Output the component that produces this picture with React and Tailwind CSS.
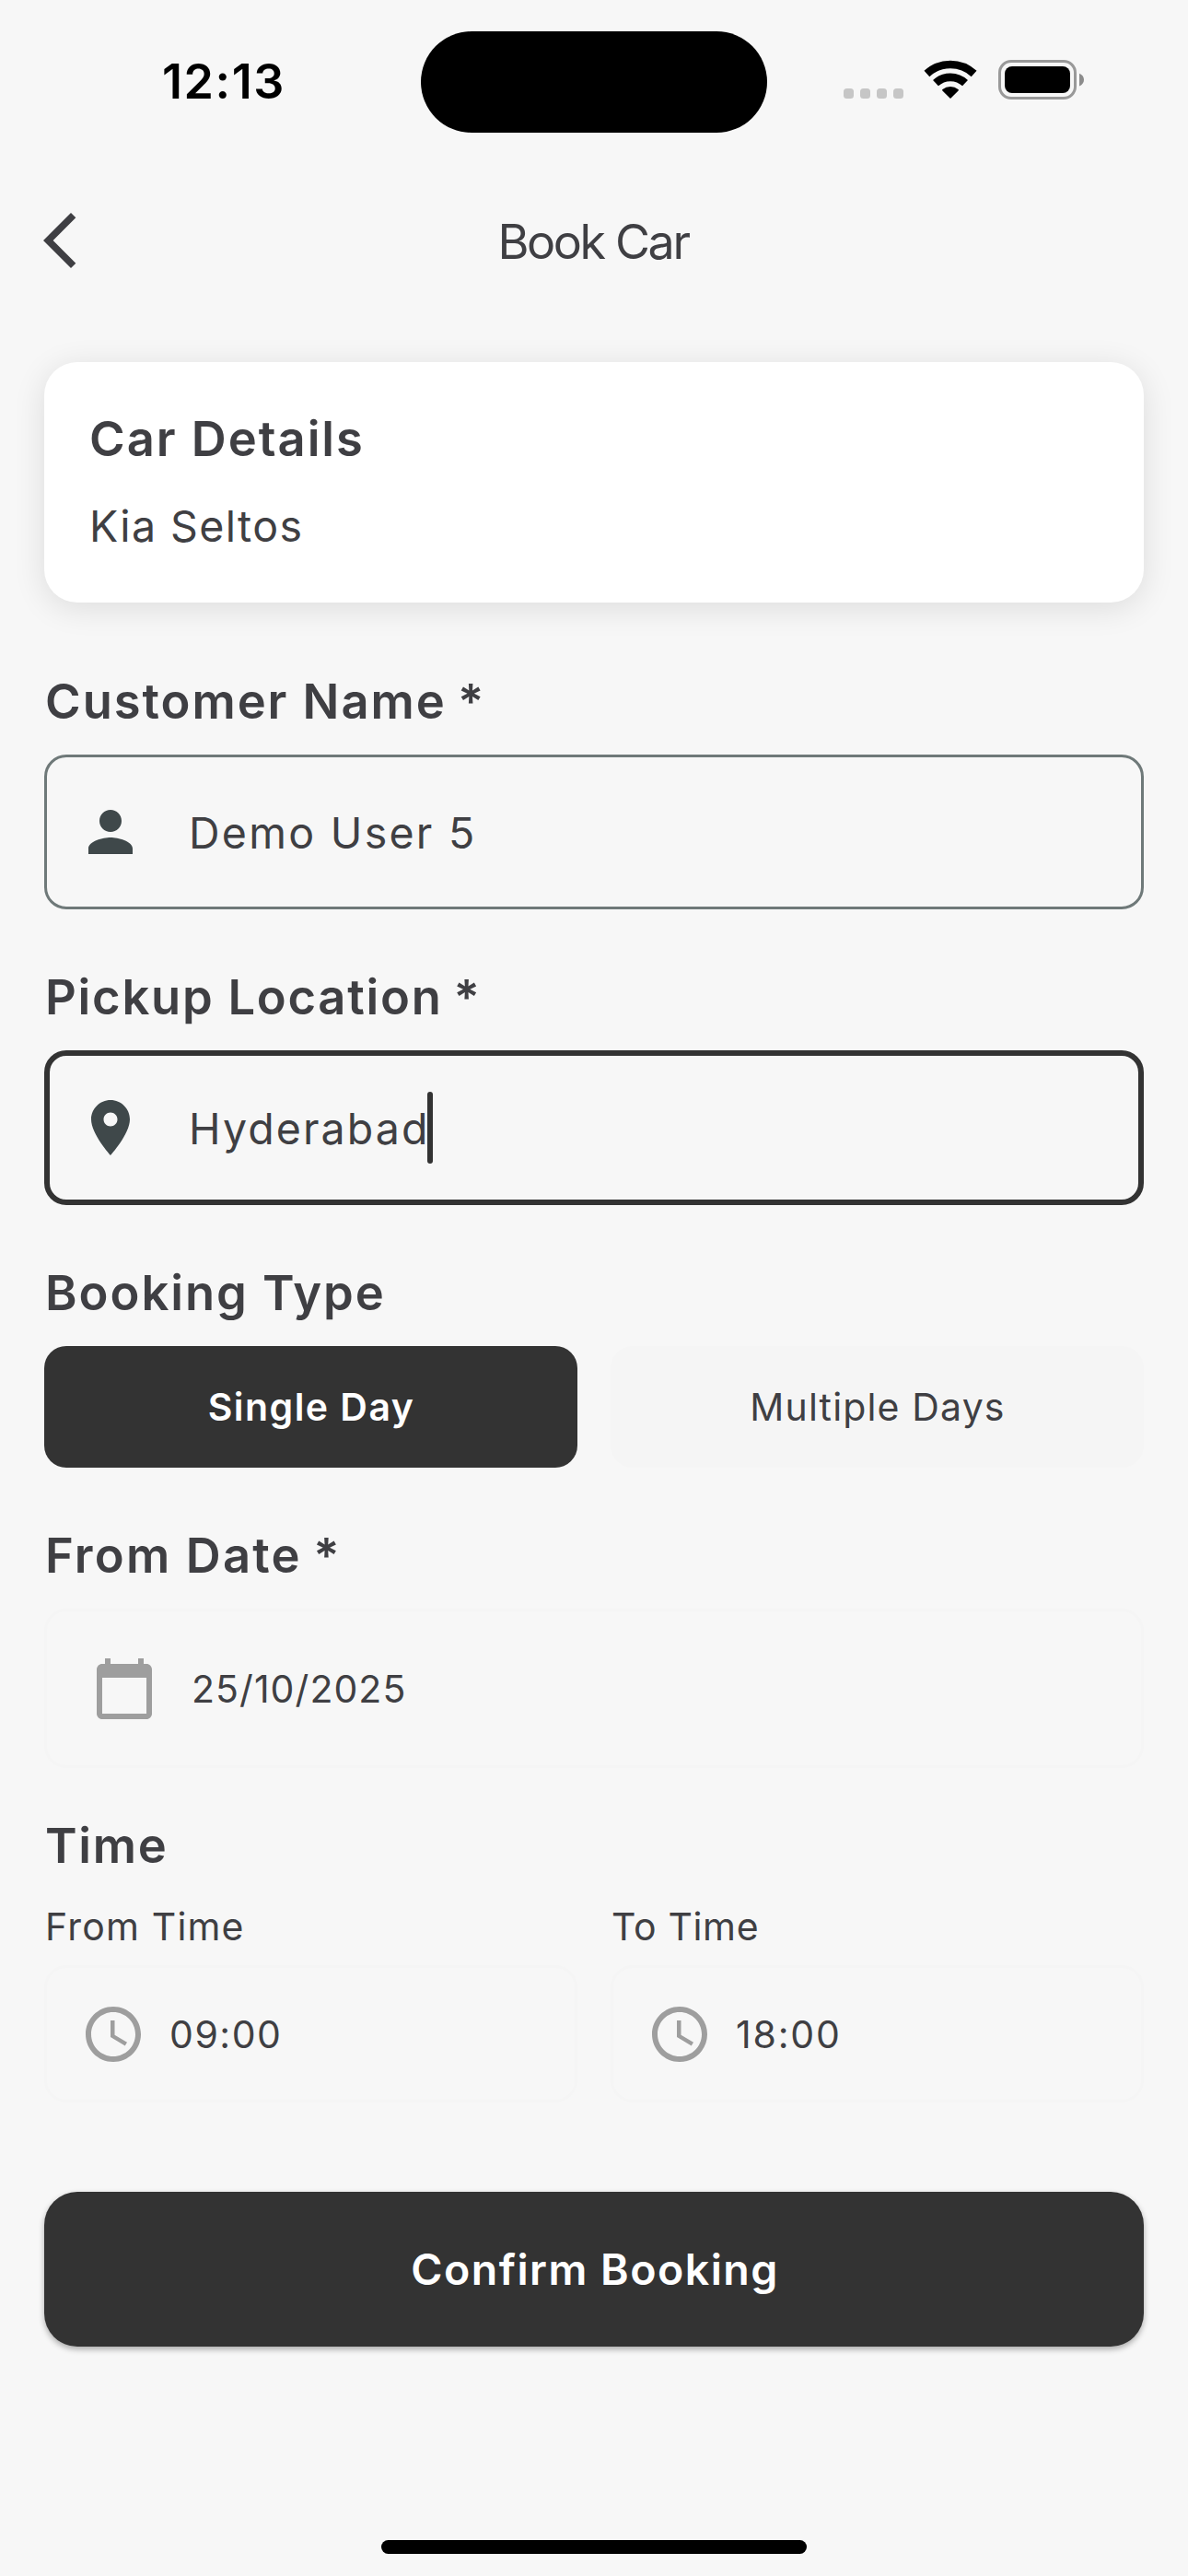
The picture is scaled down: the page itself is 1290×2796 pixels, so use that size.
function SignalDots() {
  return (
    <div className="mb-px flex items-end gap-[7px]">
      {[0, 1, 2, 3].map((i) => (
        <span key={i} className="size-[11px] rounded-[3.5px] bg-[#c6c6c6]" />
      ))}
    </div>
  );
}

function WifiIcon() {
  return (
    <svg viewBox="0 0 58 42" className="h-[42px] w-[58px]" fill="none" stroke="#000" strokeWidth="8.6">
      <path d="M3.4 15A37.7 37.7 0 0 1 54.6 15" />
      <path d="M13 25.2A23.3 23.3 0 0 1 45 25.2" />
      <path d="M29 42L20.4 33.4C20 33 20 32.4 20.5 32A13.5 13.5 0 0 1 37.5 32C38 32.4 38 33 37.6 33.4Z" fill="#000" stroke="none" />
    </svg>
  );
}

function BatteryIcon() {
  return (
    <svg viewBox="0 0 94 43" className="h-[43px] w-[94px]">
      <rect x="1.5" y="1.5" width="82" height="40" rx="12.5" fill="none" stroke="#999" strokeWidth="3" />
      <rect x="7" y="7" width="71" height="29" rx="8" fill="#000" />
      <path d="M88 14.8C91.4 16 93 18.6 93 21.6S91.4 27.2 88 28.4Z" fill="#8c8c8c" />
    </svg>
  );
}

function MaterialIcon({ d, color }) {
  return (
    <svg viewBox="0 0 24 24" className="size-[72px] shrink-0" fill={color}>
      <path d={d} />
    </svg>
  );
}

const BACK = "M17.77 3.77L16 2 6 12l10 10 1.77-1.77L9.54 12z";
const PERSON = "M12 12c2.21 0 4-1.79 4-4s-1.79-4-4-4-4 1.79-4 4 1.79 4 4 4zm0 2c-2.67 0-8 1.34-8 4v2h16v-2c0-2.66-5.33-4-8-4z";
const PIN = "M12 2C8.13 2 5 5.13 5 9c0 5.25 7 13 7 13s7-7.75 7-13c0-3.87-3.13-7-7-7zm0 9.5c-1.38 0-2.5-1.12-2.5-2.5s1.12-2.5 2.5-2.5 2.5 1.12 2.5 2.5-1.12 2.5-2.5 2.5z";
const CALENDAR = "M20 3h-1V1h-2v2H7V1H5v2H4c-1.1 0-2 .9-2 2v16c0 1.1.9 2 2 2h16c1.1 0 2-.9 2-2V5c0-1.1-.9-2-2-2zm0 18H4V8h16v13z";
const CLOCK = "M11.99 2C6.47 2 2 6.48 2 12s4.47 10 9.99 10C17.52 22 22 17.52 22 12S17.52 2 11.99 2zM12 20c-4.42 0-8-3.58-8-8s3.58-8 8-8 8 3.58 8 8-3.58 8-8 8zm.5-13H11v6l5.25 3.15.75-1.23-4.5-2.67z";

function Label({ children, required = false, className }) {
  return (
    <h2 className={`mt-[60px] mb-[23px] h-[70px] pl-px text-[52.5px] leading-[71px] font-semibold ${className}`}>
      {children}
      {required && <span className="-ml-[3px]"> *</span>}
    </h2>
  );
}

function TimeField({ label, labelClass, value, valueClass }) {
  return (
    <div>
      <p className={`h-[50px] pl-px text-[41px] leading-[51px] ${labelClass}`}>{label}</p>
      <div className="mt-[17px] flex h-[149px] items-center gap-[25px] rounded-3xl border-3 border-[#f5f5f5] px-9">
        <MaterialIcon d={CLOCK} color="#9e9e9e" />
        <span className={`pt-px text-[41px] leading-none ${valueClass}`}>{value}</span>
      </div>
    </div>
  );
}

export default function App() {
  return (
    <div className="flex h-[2796px] w-[1290px] flex-col overflow-hidden bg-[#f7f7f7] font-['Inter',sans-serif] text-[#3f3f43]">
      <div className="flex h-[177px] items-start text-black">
        <div className="flex h-[178px] w-[457px] items-center pl-[176px]">
          <span className="text-[52px] leading-none font-semibold tracking-[1.6px]">12:13</span>
        </div>
        <div className="mt-[34px] h-[110px] w-[376px] rounded-full bg-black" />
        <div className="mt-[65px] flex h-[43px] flex-1 items-end pl-[83px]">
          <SignalDots />
          <div className="ml-[22px] flex h-[43px] items-start">
            <WifiIcon />
          </div>
          <div className="ml-[23px]">
            <BatteryIcon />
          </div>
        </div>
      </div>

      <header className="grid h-[168px] grid-cols-[1fr_auto_1fr] items-center pl-[29px]">
        <MaterialIcon d={BACK} color="#3f3f43" />
        <h1 className="mt-[3px] -ml-[31px] text-[52px] leading-none tracking-[-2.39px]">Book Car</h1>
      </header>

      <main className="px-12 pt-12">
        <section className="flex h-[261px] flex-col gap-6 rounded-[36px] bg-white p-12 shadow-[0_6px_35px_#0000001c]">
          <h2 className="h-[70px] pl-px text-[52.5px] leading-[71px] font-semibold tracking-[1.98px]">Car Details</h2>
          <p className="h-[71px] pl-px text-[46.5px] leading-[73px] tracking-[1.39px]">Kia Seltos</p>
        </section>

        <div className="pt-3">
          <Label required className="tracking-[1.95px]">Customer Name</Label>
        </div>
        <div className="flex h-[168px] items-center gap-[49px] rounded-3xl border-3 border-[#6f7979] px-[33px]">
          <MaterialIcon d={PERSON} color="#3f484a" />
          <span className="pt-0.5 text-[46.5px] leading-none tracking-[2.28px]">Demo User 5</span>
        </div>

        <Label required className="tracking-[1.74px]">Pickup Location</Label>
        <div className="flex h-[168px] items-center gap-[49px] rounded-3xl border-6 border-[#333] px-[30px]">
          <MaterialIcon d={PIN} color="#3f484a" />
          <span className="flex items-center">
            <span className="pt-0.5 text-[46.5px] leading-none tracking-[2.1px]">Hyderabad</span>
            <span className="-ml-[3px] h-[78px] w-1.5 rounded-full bg-[#333]" />
          </span>
        </div>

        <Label className="tracking-[1.95px]">Booking Type</Label>
        <div className="grid grid-cols-2 gap-9">
          <button className="h-[132px] rounded-3xl bg-[#333] pl-px text-[41px] leading-none font-semibold tracking-[1.46px] text-white">
            Single Day
          </button>
          <button className="h-[132px] rounded-3xl bg-[#f5f5f5] pl-px text-[41px] leading-none tracking-[1.15px]">
            Multiple Days
          </button>
        </div>

        <Label required className="tracking-[2.2px]">From Date</Label>
        <div className="flex h-[173px] items-center gap-[37px] rounded-3xl border-3 border-[#f5f5f5] px-12">
          <MaterialIcon d={CALENDAR} color="#9e9e9e" />
          <span className="pt-px text-[41px] leading-none tracking-[1.06px]">25/10/2025</span>
        </div>

        <h2 className="mt-[49px] mb-7 h-[70px] pl-px text-[52.5px] leading-[71px] font-semibold tracking-[1.7px]">Time</h2>
        <div className="grid grid-cols-2 gap-9">
          <TimeField label="From Time" labelClass="tracking-[1.19px]" value="09:00" valueClass="tracking-[1.51px]" />
          <TimeField label="To Time" labelClass="tracking-[0.67px]" value="18:00" valueClass="tracking-[1.82px]" />
        </div>

        <button className="mt-[97px] h-[168px] w-full rounded-[36px] bg-[#333] pl-0.5 text-[46.5px] leading-none font-semibold tracking-[1.47px] text-white shadow-[0_3px_6px_#00000050]">
          Confirm Booking
        </button>
      </main>

      <div className="mx-auto mt-auto mb-6 h-[15px] w-[462px] rounded-full bg-black" />
    </div>
  );
}
